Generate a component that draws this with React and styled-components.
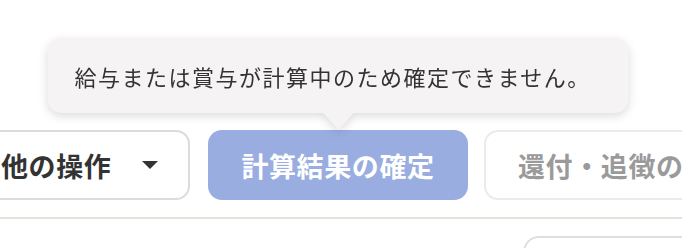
import React from "react";
import styled, { createGlobalStyle } from "styled-components";

const Global = createGlobalStyle`
  html, body { margin: 0; padding: 0; background: #ffffff; }
  body { font-family: "Noto Sans CJK JP", "Noto Sans", sans-serif; }
  * { box-sizing: border-box; }
`;

const Page = styled.div`
  position: relative;
  width: 682px;
  height: 248px;
  overflow: hidden;
  background: #ffffff;
`;

const Toolbar = styled.div`
  display: flex;
  align-items: center;
  gap: 16px;
  margin-top: 130px;
  margin-left: -34px;
`;

const Button = styled.button`
  flex: none;
  display: inline-flex;
  align-items: center;
  height: 70px;
  padding: 0 32px;
  border-radius: 14px;
  border: 2px solid ${(p) => (p.$muted ? "#ebebeb" : "#dcdcdc")};
  background: #ffffff;
  color: ${(p) => (p.$muted ? "#9a9a9a" : "#333333")};
  font-family: "Noto Sans CJK JP", "Noto Sans", sans-serif;
  font-weight: 700;
  font-size: 27px;
  letter-spacing: 0.6px;
  white-space: nowrap;
`;

const MenuButton = styled(Button)`
  width: 224px;
  padding: 0 30px 0 33px;
`;

const PrimaryButton = styled(Button)`
  width: 260px;
  justify-content: center;
  border: none;
  background: #99ade0;
  color: #ffffff;
`;

const Caret = styled.svg`
  margin-left: auto;
  width: 16px;
  height: 8px;
`;

const Anchor = styled.div`
  position: relative;
  flex: none;
  margin-left: 2px;
`;

const Tooltip = styled.div`
  position: absolute;
  left: 50%;
  bottom: calc(100% + 17px);
  transform: translateX(-50%);
  width: 581px;
  height: 75px;
  display: flex;
  align-items: center;
  padding: 0 27px;
  border-radius: 14px;
  background: #f5f3f4;
  color: #333333;
  font-size: 22px;
  letter-spacing: 1.5px;
  white-space: nowrap;
  filter: drop-shadow(0 3px 5px rgba(0, 0, 0, 0.14));

  &::after {
    content: "";
    position: absolute;
    left: 50%;
    top: 100%;
    transform: translateX(-50%);
    border-left: 15px solid transparent;
    border-right: 15px solid transparent;
    border-top: 17px solid #f5f3f4;
  }
`;

const Divider = styled.div`
  height: 2px;
  margin-top: 17px;
  background: #e6e3dd;
`;

const LowerRow = styled.div`
  display: flex;
  justify-content: flex-end;
  padding-top: 17px;
`;

const Panel = styled.div`
  width: 180px;
  height: 60px;
  margin-right: -21px;
  border: 2px solid #dedede;
  border-radius: 16px;
`;

export default function App() {
  return (
    <>
      <Global />
      <Page>
        <Toolbar>
          <MenuButton>
            他の操作
            <Caret viewBox="0 0 16 8">
              <path d="M0 0 L16 0 L8 8 Z" fill="#333333" />
            </Caret>
          </MenuButton>
          <Anchor>
            <Tooltip>給与または賞与が計算中のため確定できません。</Tooltip>
            <PrimaryButton>計算結果の確定</PrimaryButton>
          </Anchor>
          <Button $muted>還付・追徴の処理</Button>
        </Toolbar>
        <Divider />
        <LowerRow>
          <Panel />
        </LowerRow>
      </Page>
    </>
  );
}
